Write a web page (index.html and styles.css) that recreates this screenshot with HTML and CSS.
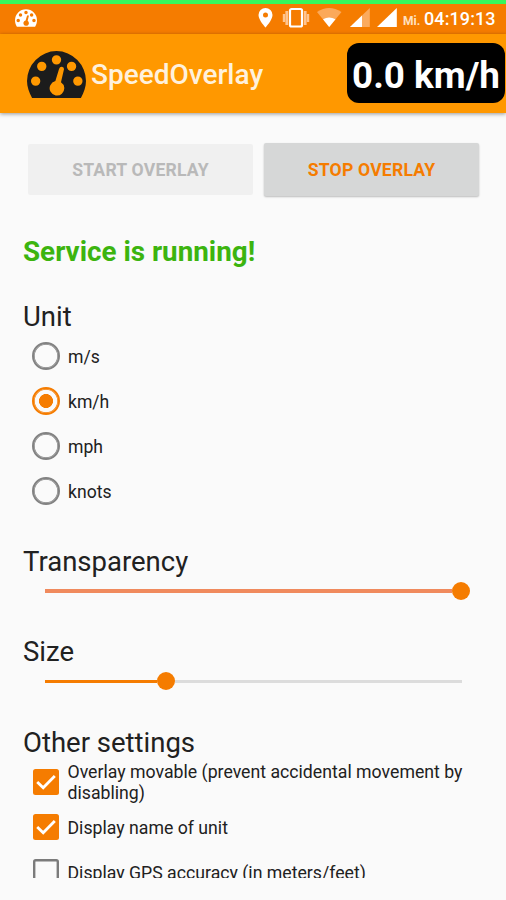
FILE: index.html
```
<!DOCTYPE html>
<html lang="en">
<head>
<meta charset="utf-8">
<title>SpeedOverlay</title>
<link rel="stylesheet" href="styles.css">
</head>
<body>
<svg class="defs" width="0" height="0">
  <symbol id="gauge" viewBox="0 0 58 46">
    <path fill-rule="evenodd" d="M5 46C2 41 0 35 0 29.500A29 29.500 0 0 1 58 29.500C58 35 56 41 53 46Z
      M29 4A4.600 4.600 0 1 0 29 13.200A4.600 4.600 0 1 0 29 4Z
      M14.500 10.400A4.600 4.600 0 1 0 14.500 19.600A4.600 4.600 0 1 0 14.500 10.400Z
      M43.800 10.400A4.600 4.600 0 1 0 43.800 19.600A4.600 4.600 0 1 0 43.800 10.400Z
      M8.500 24.900A4.600 4.600 0 1 0 8.500 34.100A4.600 4.600 0 1 0 8.500 24.900Z
      M50 24.900A4.600 4.600 0 1 0 50 34.100A4.600 4.600 0 1 0 50 24.900Z
      M31.500 17.500Q32.200 15.300 34.400 15.500Q36.700 16 36.300 18.200L33.400 30.500A7.200 7.200 0 1 1 27.900 29.500Z"/>
  </symbol>
</svg>
<div class="progress"></div>
<div class="status">
  <svg class="mini-gauge"><use href="#gauge"/></svg>
  <svg class="status-icons" viewBox="0 0 140 22" width="140" height="22">
    <path fill="#fff" fill-rule="evenodd" d="M7.500 1A7 7 0 0 0 .500 8C.500 13 7.500 20.500 7.500 20.500S14.500 13 14.500 8A7 7 0 0 0 7.500 1ZM7.500 5.500A2.500 2.500 0 1 1 7.500 10.500A2.500 2.500 0 1 1 7.500 5.500Z"/>
    <rect x="32" y="2" width="12" height="17.500" rx="1.500" fill="none" stroke="#fff" stroke-width="2.200"/>
    <path d="M28.800 4V18M47.200 4V18" stroke="#ffc590" stroke-width="2.800"/>
    <path d="M26 7V15M50 7V15" stroke="#ffc590" stroke-width="2.400"/>
    <path d="M59 5Q71 -3 83.500 5L71.200 20Z" fill="#fba95a"/>
    <path d="M65 12.200Q71 9 77.500 12.200L71.200 20Z" fill="#fff"/>
    <path d="M111.800 1V20H92Z" fill="#fbab5e"/>
    <path d="M104 8.500V20H92Z" fill="#fff"/>
    <path d="M138.800 1V20H119Z" fill="#fff"/>
  </svg>
  <span class="day">Mi.</span>
  <span class="clock">04:19:13</span>
</div>
<header class="appbar">
  <svg class="logo"><use href="#gauge"/></svg>
  <h1>SpeedOverlay</h1>
  <div class="speed"><span>0.0 km/h</span></div>
</header>
<main>
  <div class="buttons">
    <button class="start" disabled>START OVERLAY</button>
    <button class="stop">STOP OVERLAY</button>
  </div>
  <p class="service">Service is running!</p>
  <h2>Unit</h2>
  <div class="option"><i class="radio"></i><span>m/s</span></div>
  <div class="option"><i class="radio on"></i><span>km/h</span></div>
  <div class="option"><i class="radio"></i><span>mph</span></div>
  <div class="option"><i class="radio"></i><span>knots</span></div>
  <h2 class="spaced">Transparency</h2>
  <div class="slider full"><i class="fill"></i><i class="thumb"></i></div>
  <h2 class="size-title">Size</h2>
  <div class="slider part"><i class="fill"></i><i class="thumb"></i><i class="rest"></i></div>
  <h2 class="other-title">Other settings</h2>
  <div class="option wide"><svg class="check" viewBox="0 0 26 26"><rect width="26" height="26" rx="2.500" fill="#f57c00"/><path d="M4.200 13L10.200 18.700L21.800 7" fill="none" stroke="#fff" stroke-width="2.800"/></svg><span>Overlay movable (prevent accidental movement by<br>disabling)</span></div>
  <div class="option wide"><svg class="check" viewBox="0 0 26 26"><rect width="26" height="26" rx="2.500" fill="#f57c00"/><path d="M4.200 13L10.200 18.700L21.800 7" fill="none" stroke="#fff" stroke-width="2.800"/></svg><span>Display name of unit</span></div>
  <div class="option wide"><svg class="check" viewBox="0 0 26 26"><rect x="1.200" y="1.200" width="23.600" height="23.600" rx="1.500" fill="none" stroke="#7b7b7b" stroke-width="2.400"/></svg><span>Display GPS accuracy (in meters/feet)</span></div>
</main>
</body>
</html>
```

FILE: styles.css
```
* { box-sizing: border-box; }
body {
  margin: 0;
  height: 900px;
  overflow: hidden;
  background: #fafafa;
  color: #212121;
  font-family: Roboto, "Liberation Sans", sans-serif;
}
.defs { position: absolute; }
.progress { height: 4px; background: #35f75c; }
.status {
  height: 30px;
  background: #f57c00;
  color: #fff;
  display: flex;
  align-items: center;
}
.mini-gauge { width: 22px; height: 18px; margin: 0 0 2px 15px; fill: #fff; }
.status-icons { margin: 0 0 2px 221px; flex: none; }
.day { width: 21px; margin-left: 5px; font-size: 12px; font-weight: 700; color: #ffe0c0; padding-top: 3px; }
.clock { font-size: 18px; font-weight: 500; letter-spacing: 0.1px; white-space: nowrap; margin-bottom: 2px; }
.appbar {
  height: 79px;
  padding: 0 1px 0 27px;
  display: flex;
  align-items: center;
  background: #ff9800;
  box-shadow: 0 1px 4px rgba(0, 0, 0, .4);
}
.logo { width: 59px; height: 47px; margin: 2px 5px 0 0; fill: #1c1c1c; flex: none; }
h1 { margin: 2px 0 0; font-size: 28px; font-weight: 500; color: #fff1dc; white-space: nowrap; }
.speed {
  width: 158px;
  height: 60px;
  margin-left: auto;
  margin-bottom: 1px;
  border-radius: 12px;
  background: #000;
  color: #fff;
  display: flex;
  align-items: center;
  justify-content: center;
  font-size: 36.8px;
  font-weight: 700;
  white-space: nowrap;
}
.speed span { padding-top: 4px; }
main { height: 765px; padding: 30px 23px 0; overflow: hidden; }
.buttons { display: flex; gap: 11px; padding-left: 5px; align-items: center; height: 53px; }
button { border: 0; padding: 0; font: 700 17.6px Roboto, sans-serif; letter-spacing: 0.2px; border-radius: 2px; }
.start { width: 225px; height: 51px; background: #f0f0f0; color: #b9b9b9; }
.stop { width: 215px; height: 53px; background: #d6d7d7; color: #f57c00; box-shadow: 0 1px 2px rgba(0, 0, 0, .25); }
.service { margin: 40px 0 0; font-size: 27.8px; line-height: 32px; font-weight: 700; color: #3cb40f; }
h2 { margin: 33px 0 0; font-size: 27.5px; line-height: 32px; font-weight: 400; }
.option { height: 45px; display: flex; align-items: center; padding-left: 8.500px; font-size: 17.6px; line-height: 20.500px; white-space: nowrap; }
.option span { padding-top: 3px; }
.option.wide { font-size: 17.7px; }
.option.wide span { padding-top: 2.500px; }
.radio {
  width: 28px;
  height: 28px;
  flex: none;
  margin-right: 8.500px;
  border: 2px solid #828282;
  border-radius: 50%;
  box-shadow: inset 0 0 0 0.700px #828282;
}
.radio.on { border-color: #f57c00; box-shadow: inset 0 0 0 0.700px #f57c00; background: radial-gradient(circle, #f57c00 6.700px, transparent 7.300px); }
h2.spaced { margin-top: 33px; }
.slider { height: 18px; margin: 4px 13px 0 22px; display: flex; align-items: center; }
.fill { height: 3px; background: #f57c00; }
.thumb { width: 18px; height: 18px; border-radius: 50%; background: #f57c00; flex: none; }
.full .fill { flex: 1; height: 4px; background: #f08a5d; }
.part .fill { width: 112px; }
.rest { flex: 1; margin-right: 8px; height: 3px; background: #dcdcdc; }
h2.size-title { margin-top: 36px; }
h2.other-title { margin-top: 37px; }
.check { width: 26px; height: 26px; flex: none; margin: 0 9px 0 1px; }
```
